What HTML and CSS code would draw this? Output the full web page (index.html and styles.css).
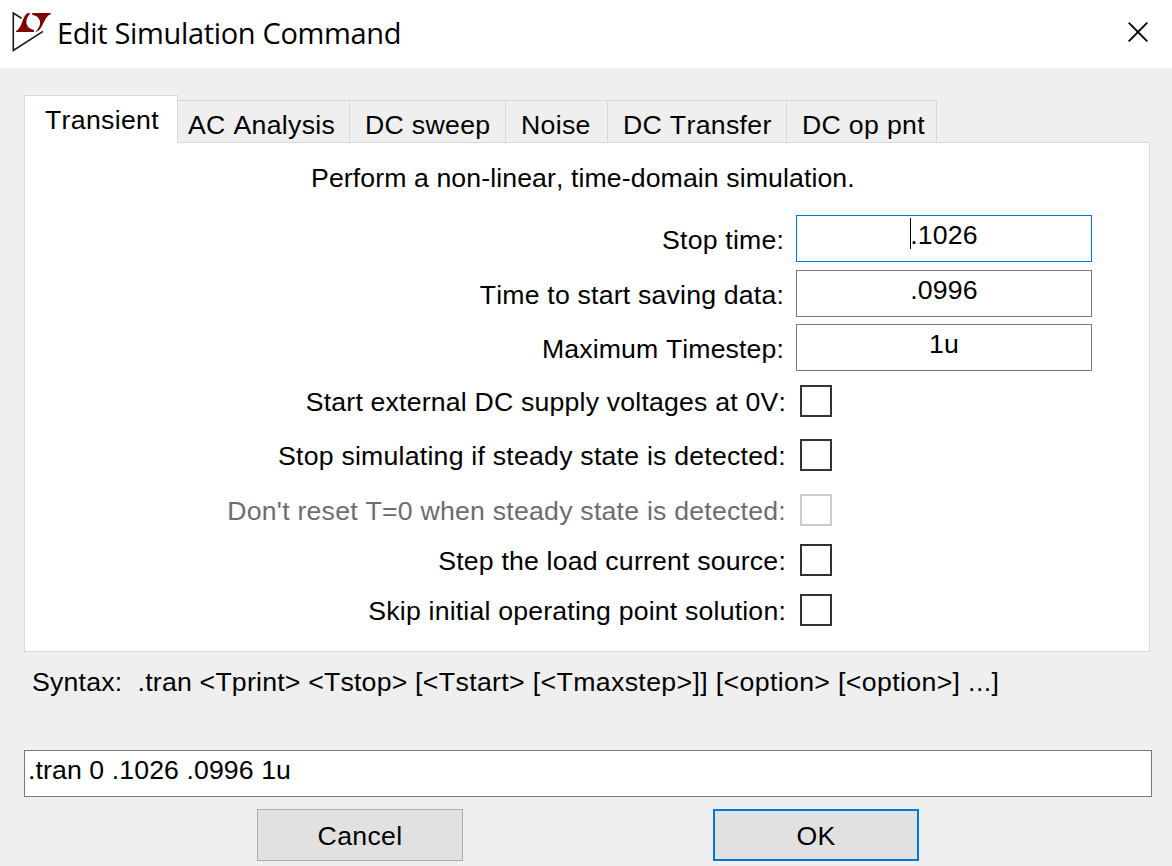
FILE: index.html
```html
<!DOCTYPE html>
<html lang="en">
<head>
<meta charset="utf-8">
<title>Edit Simulation Command</title>
<link rel="stylesheet" href="styles.css">
</head>
<body>
<div class="dialog">
  <header class="titlebar">
    <svg class="logo" width="40" height="42" viewBox="0 0 40 42">
      <path d="M9.5 6.2 L1.3 1 V38.5 L31 19.3" fill="none" stroke="#1a1a1a" stroke-width="1.6"/>
      <path d="M18.6 1.2 C15.6 4.2 14.2 7 14.4 10.4 C14.7 14 17 16.6 22 18 V20 H4 V19 C6.4 18 7.8 16 9.2 12.6 C10.6 9 11.6 4.4 15 1.2 Z" fill="#800000"/>
      <path d="M20.3 1 H38.6 V2.2 C35.6 3.2 34 6.2 32 10 C29.8 14.2 28.6 18.2 24.4 19.8 H23.4 C26.6 16.8 28.6 12.8 28 9.5 C27.5 6 24.6 3.6 20.3 3.1 Z" fill="#800000"/>
    </svg>
    <h1 class="title">Edit Simulation Command</h1>
    <svg class="close" width="20" height="20" viewBox="0 0 20 20"><path d="M.7 .7 L19.3 19.3 M19.3 .7 L.7 19.3" stroke="#000" stroke-width="1.9" fill="none"/></svg>
  </header>
  <nav class="tabs">
    <div class="tab active"><span>Transient</span></div>
    <div class="tab ac"><span>AC Analysis</span></div>
    <div class="tab sweep"><span>DC sweep</span></div>
    <div class="tab noise"><span>Noise</span></div>
    <div class="tab transfer"><span>DC Transfer</span></div>
    <div class="tab op"><span>DC op pnt</span></div>
  </nav>
  <main class="panel">
    <p class="intro"><span>Perform a non-linear, time-domain simulation.</span></p>
    <div class="fields">
      <div class="row"><label class="label stop">Stop time:</label><div class="field focused"><i class="caret"></i><span>.1026</span></div></div>
      <div class="row"><label class="label start">Time to start saving data:</label><div class="field"><span>.0996</span></div></div>
      <div class="row"><label class="label step">Maximum Timestep:</label><div class="field"><span>1u</span></div></div>
    </div>
    <div class="checks">
      <div class="check"><label class="label external">Start external DC supply voltages at 0V:</label><div class="box"></div></div>
      <div class="check"><label class="label steady">Stop simulating if steady state is detected:</label><div class="box"></div></div>
      <div class="check disabled"><label class="label reset">Don't reset T=0 when steady state is detected:</label><div class="box"></div></div>
      <div class="check"><label class="label load">Step the load current source:</label><div class="box"></div></div>
      <div class="check"><label class="label skip">Skip initial operating point solution:</label><div class="box"></div></div>
    </div>
  </main>
  <p class="syntax"><span>Syntax:&nbsp; .tran &lt;Tprint&gt; &lt;Tstop&gt; </span><span class="optional">[&lt;Tstart&gt; [&lt;Tmaxstep&gt;]] [&lt;option&gt; [&lt;option&gt;] ...]</span></p>
  <div class="command"><span>.tran 0 .1026 .0996 1u</span></div>
  <footer class="buttons">
    <div class="button">Cancel</div>
    <div class="button default">OK</div>
  </footer>
</div>
</body>
</html>
```
FILE: styles.css
```css
* { box-sizing: border-box; }
body { margin: 0; background: #efefef; }
.dialog {
  width: 1172px;
  height: 866px;
  overflow: hidden;
  background: #efefef;
  color: #000;
  font: 26.67px/32px "Liberation Sans", Arial, sans-serif;
  font-kerning: none;
  letter-spacing: 0.19px;
  white-space: nowrap;
}
h1, p { margin: 0; font-weight: 400; }
.titlebar { display: flex; align-items: flex-start; height: 68px; background: #fff; padding: 12px 24px 0 12px; }
.logo { flex: none; }
.title { font: 29px/42px "Open Sans", "Noto Sans", sans-serif; margin-left: 5px; letter-spacing: -0.33px; }
.close { margin: 10px 0 0 auto; }
.tabs { display: flex; align-items: flex-end; height: 75px; padding-left: 24px; margin-bottom: -1px; letter-spacing: 0.32px; }
.tab { height: 43px; border: 1px solid #d9d9d9; border-left: 0; padding-top: 8px; }
.active { position: relative; width: 154px; height: 48px; border-left: 1px solid #d9d9d9; border-bottom: 0; background: #fff; padding: 8px 0 0 20px; }
.ac { width: 172px; padding-left: 10px; }
.sweep { width: 156px; padding-left: 15px; }
.noise { width: 102px; padding-left: 15px; }
.transfer { width: 179px; padding-left: 15px; }
.op { width: 150px; padding-left: 15px; }
.panel { width: 1126px; height: 510px; margin-left: 24px; border: 1px solid #d9d9d9; background: #fff; }
.intro { height: 72px; padding: 19px 0 0 286px; letter-spacing: 0.1px; }
.fields { display: grid; grid-template-rows: 55px 54px 47px; }
.row { display: flex; }
.label { text-align: right; }
.row .label { width: 759px; padding-top: 9px; }
.step { letter-spacing: 0.12px; }
.steady, .reset { letter-spacing: 0.23px; }
.field { position: relative; width: 296px; height: 47px; margin-left: 12px; border: 1px solid #7a7a7a; text-align: center; padding-top: 3px; }
.focused { border-color: #0078d7; }
.caret { position: absolute; left: 113px; top: 2px; width: 1px; height: 31px; background: #000; }
.checks { display: grid; grid-template-rows: 54px 55px 50px 50px 32px; margin-top: 14px; }
.check { display: flex; }
.check .label { width: 761px; padding-top: 1px; }
.box { width: 32px; height: 32px; margin-left: 14px; border: 2px solid #333; }
.disabled { color: #6d6d6d; }
.disabled .box { border-color: #ccc; }
.syntax { height: 98px; padding: 14px 0 0 32px; letter-spacing: 0.21px; }
.optional { letter-spacing: 0.37px; }
.command { width: 1128px; height: 47px; margin-left: 24px; border: 1px solid #7a7a7a; background: #fff; padding: 3px 0 0 3px; letter-spacing: 0.1px; }
.buttons { display: flex; gap: 250px; padding: 12px 0 0 257px; }
.button { width: 206px; height: 52px; border: 1px solid #adadad; background: #e1e1e1; text-align: center; line-height: 52px; letter-spacing: 0.3px; }
.default { border: 2px solid #0078d7; line-height: 50px; }
```
